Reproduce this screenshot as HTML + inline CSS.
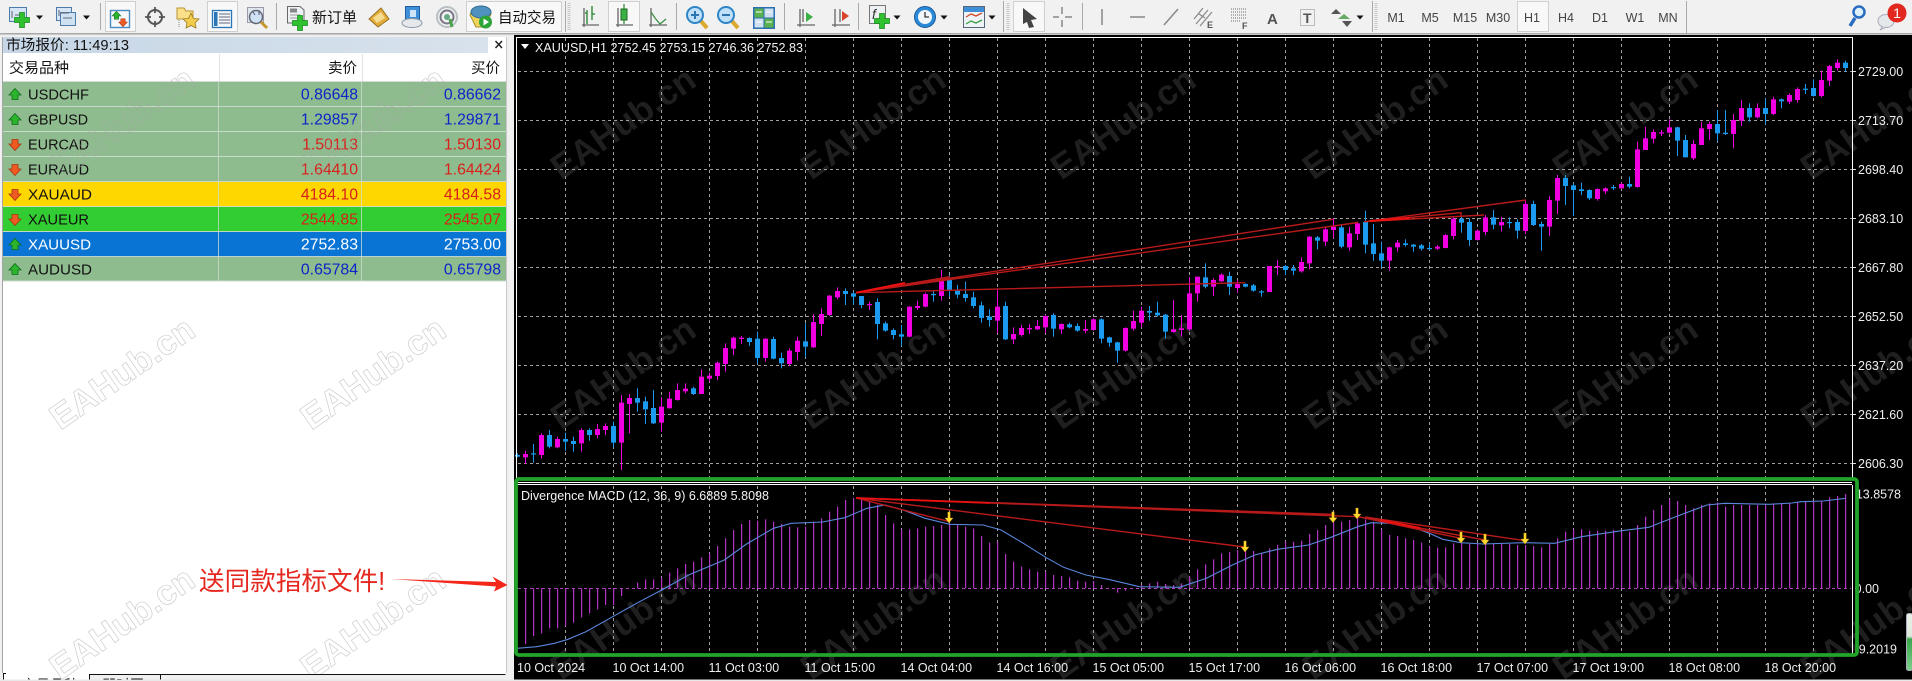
<!DOCTYPE html>
<html lang="zh"><head><meta charset="utf-8"><title>MT4</title>
<style>
html,body{margin:0;padding:0;background:#f0f0f0;width:1912px;height:681px;overflow:hidden}
svg{display:block;font-family:"Liberation Sans","Noto Sans CJK SC",sans-serif}
.ax{font-size:12.5px;fill:#eee}
.tf{font-size:12.5px;fill:#444;text-anchor:middle}
.s{font-size:15px;fill:#111}
.p{font-size:15.8px;text-anchor:end}
.wm{font-size:35px;font-weight:bold;text-anchor:middle}
</style></head><body>
<svg xmlns="http://www.w3.org/2000/svg" width="1912" height="681" viewBox="0 0 1912 681">
<defs>
<clipPath id="cp"><rect x="0" y="36" width="506" height="645"/></clipPath>
<clipPath id="cc"><rect x="514" y="36" width="1398" height="644"/></clipPath>
<linearGradient id="tb" x1="0" x2="1"><stop offset="0" stop-color="#c6d6e6"/><stop offset="1" stop-color="#d8e2ec"/></linearGradient>
<linearGradient id="gg" x1="0" y1="0" x2="0" y2="1"><stop offset="0" stop-color="#e8f0e8"/><stop offset=".4" stop-color="#dfe8df"/><stop offset=".45" stop-color="#3aa84c"/><stop offset="1" stop-color="#7ccf8c"/></linearGradient>
<g id="dd"><polygon points="-3.5,15.5 3.5,15.5 0,19.5" fill="#111"/></g>
<g id="up"><polygon points="0,-6.5 6,0 3,0 3,4.5 -3,4.5 -3,0 -6,0" fill="#2cb52c" stroke="#0d6d1a" stroke-width=".8"/></g>
<g id="dn"><polygon points="0,6.5 6,0 3,0 3,-4.5 -3,-4.5 -3,0 -6,0" fill="#ee5a22" stroke="#a83410" stroke-width=".8"/></g>
<g id="plus"><path d="M-2.5,-7.5h5v5h5v5h-5v5h-5v-5h-5v-5h5z" fill="#30c030" stroke="#138a1b" stroke-width=".7"/></g>
</defs>

<!-- toolbar -->
<rect x="0" y="0" width="1912" height="33" fill="#f1f1f1"/>
<rect x="0" y="33" width="1912" height="1.5" fill="#a8a8a8"/>
<rect x="0" y="34.5" width="1912" height="2" fill="#ececec"/>
<g stroke="#aaa" stroke-width="1">
<path d="M100.5,3V30M276.5,3V30M565.5,1V32M676.5,3V30M784.5,3V30M858.5,3V30M1003.5,1V32M1082.5,3V30M1372.5,1V32M1686.5,1V33"/>
</g>
<g fill="none" stroke="#c6c6c6" stroke-dasharray="1 1" stroke-width="3"><path d="M569,3V31M1008,3V31M1376,3V31"/></g>
<g fill="#f8f8f8" stroke="#cfcfcf"><rect x="105.5" y="1.5" width="30" height="30"/><rect x="207.5" y="1.5" width="30" height="30"/><rect x="466.5" y="1.5" width="95" height="30"/><rect x="608.5" y="1.5" width="31" height="30"/><rect x="1013.5" y="1.5" width="31" height="30"/><rect x="1517.5" y="1.5" width="31" height="30"/></g>

<!-- new chart -->
<g transform="translate(18,15)"><rect x="-8.5" y="-7.5" width="17" height="14" fill="#d6e6f5" stroke="#4d7cab"/><path d="M-6,-4V3M-3,0H4" stroke="#667" fill="none"/><use href="#plus" x="4" y="5"/></g>
<use href="#dd" x="39.5" y="0"/>
<g transform="translate(66,16)"><rect x="-9.5" y="-8.5" width="15" height="13" fill="#d6e6f5" stroke="#4d7cab"/><rect x="-5.5" y="-3.5" width="15" height="13" fill="#cfe2f3" stroke="#4d7cab"/><path d="M-7,-6V0M-6,-3H3M-3,2H6" stroke="#667" fill="none"/></g>
<use href="#dd" x="86.5" y="0"/>
<!-- market watch -->
<g transform="translate(120,19)"><rect x="-9.5" y="-8.5" width="19" height="17" fill="#f6f9fc" stroke="#4b8bc1" stroke-width="1.4"/><g transform="translate(-3.5,-3) scale(.72)"><use href="#up"/></g><g transform="translate(3,3) scale(.72)"><use href="#dn"/></g></g>
<!-- navigator -->
<g transform="translate(155,17)" fill="none" stroke="#555" stroke-width="2"><circle r="7"/><path d="M0,-10V-4M0,4V10M-10,0H-4M4,0H10" stroke-width="1.8"/></g>
<!-- folder star -->
<g transform="translate(188,17)"><path d="M-11,-9H-4L-2,-6H5V2H-11Z" fill="#fbe08a" stroke="#b89430"/><path d="M-9,3v7" stroke="#888" stroke-dasharray="1 1"/><polygon points="3,-4 5.5,1.5 11,2 7,6 8,11 3,8.5 -2,11 -1,6 -5,2 .5,1.5" fill="#f3cc4e" stroke="#9a7a1e" stroke-width=".8"/></g>
<!-- terminal -->
<g transform="translate(222,19)"><rect x="-9.5" y="-8.5" width="19" height="17" fill="#f4f8fc" stroke="#2a75b5" stroke-width="1.3"/><rect x="-8" y="-7" width="3.5" height="14" fill="#2a75b5"/><path d="M-3,-5H8M-3,-2H8M-3,1H8M-3,4H8" stroke="#667"/></g>
<!-- tester -->
<g transform="translate(257,16)"><rect x="-9.5" y="-8.5" width="16" height="15" fill="#e0e6ee" stroke="#99a"/><circle cx="-1" cy="1" r="6.5" fill="#cfe2f3" stroke="#667" stroke-width="1.5"/><path d="M4,6L10,12" stroke="#c4962c" stroke-width="3"/><path d="M-4,-4l2,3M2,-6v5" stroke="#557"/></g>
<!-- new order -->
<g transform="translate(296,15)"><path d="M-8.5,-8.5H4L8,-5V8H-8.5Z" fill="#eef1f4" stroke="#666"/><rect x="-6" y="-6.5" width="7" height="4" fill="#888"/><path d="M-6,0H4M-6,3H1" stroke="#999"/><use href="#plus" x="4" y="8"/></g>
<text x="312" y="22.5" font-size="15" fill="#111" textLength="45" lengthAdjust="spacingAndGlyphs">新订单</text>
<!-- diamond -->
<g transform="translate(379,17)"><polygon points="-10,2 2,-9 10,2 -1,10" fill="#e2ad3c" stroke="#9a7220"/><polygon points="-6,1 2,-5 6,1 -2,6" fill="#f6dc92"/></g>
<!-- book cloud -->
<g transform="translate(413,16)"><rect x="-7.5" y="-9.5" width="14" height="14" fill="#3f8fd8" stroke="#1f5f9f"/><rect x="-3" y="-6" width="6" height="7" fill="#cfe6fa"/><ellipse cx="-1" cy="7" rx="10" ry="4.5" fill="#e6e8ec" stroke="#89a"/></g>
<!-- radio -->
<g transform="translate(447,17)" fill="none"><circle r="10" stroke="#b8c0c4" stroke-width="2"/><circle r="6.5" stroke="#778" stroke-width="2"/><circle r="3" fill="#6a8"/><path d="M3,2L5,10" stroke="#49a34f" stroke-width="3"/></g>
<!-- autotrade -->
<g transform="translate(481,17)"><path d="M-11,-2C-9,-12 7,-13 10,-3L4,10H-5Z" fill="#f1d55b" stroke="#a78f2c"/><ellipse cx="0" cy="-5" rx="10" ry="6" fill="#4f92bf" stroke="#2d6a90"/><circle cx="4.5" cy="5" r="6.5" fill="#2ca438"/><polygon points="2.5,1.5 8,5 2.5,8.5" fill="#fff"/></g>
<text x="498" y="22.5" font-size="15" fill="#111" textLength="58" lengthAdjust="spacingAndGlyphs">自动交易</text>
<!-- bars/candle/line -->
<g fill="none" stroke="#666" stroke-width="1.3">
<path d="M582,25H599M584,27V8"/><path d="M587,10V24M592,6V20M587,13h-2M592,14h3" stroke="#3b8f44" stroke-width="1.5"/>
<path d="M616,25H633M618,27V8"/><path d="M624,4V24" stroke="#3b8f44"/>
<path d="M649,25H667M651,27V8"/><path d="M651,12L655,18L660,24L666,19" stroke="#3b8f44"/>
</g>
<rect x="621" y="9" width="6" height="11" fill="#3bb044" stroke="#1d6a25"/>
<!-- zoom -->
<g transform="translate(695,15)"><path d="M5,5L12,13" stroke="#dca92f" stroke-width="4"/><circle r="8" fill="#bfe0f8" stroke="#2e86c8" stroke-width="2"/><path d="M-4,0H4M0,-4V4" stroke="#2e74b0" stroke-width="2"/></g>
<g transform="translate(726,15)"><path d="M5,5L12,13" stroke="#dca92f" stroke-width="4"/><circle r="8" fill="#bfe0f8" stroke="#2e86c8" stroke-width="2"/><path d="M-4,0H4" stroke="#2e74b0" stroke-width="2"/></g>
<g transform="translate(753,7)"><rect width="22" height="22" fill="#2a6fb0"/><rect x="1.5" y="1.5" width="9" height="9" fill="#5ab04c"/><rect x="11.5" y="1.5" width="9" height="9" fill="#cfe0f0"/><rect x="1.5" y="11.5" width="9" height="9" fill="#cfe0f0"/><rect x="11.5" y="11.5" width="9" height="9" fill="#5ab04c"/><path d="M3,5h6M13,5h6M3,15h6M13,15h6" stroke="#fff"/></g>
<g fill="none" stroke="#666" stroke-width="1.3"><path d="M797,25H815M800,27V9M803,9V22"/><path d="M832,25H850M835,27V9M840,9V22"/></g>
<polygon points="806,12 813,17 806,22" fill="#3bb044"/><polygon points="851,17 844,12 844,22" fill="#d8442a" transform="translate(-2,-1)"/>
<!-- indicators -->
<g transform="translate(878,15)"><rect x="-8.5" y="-9.5" width="16" height="18" fill="#eef1f4" stroke="#777"/><text x="-6" y="4" font-size="14" font-style="italic" fill="#333">f</text><use href="#plus" x="4" y="6"/></g>
<use href="#dd" x="897" y="0"/>
<g transform="translate(925,17)"><circle r="10.5" fill="#2a8ad8" stroke="#1a5a9a"/><circle r="7" fill="#f2f6fa"/><path d="M0,-5V0H4" stroke="#333" stroke-width="1.3" fill="none"/></g>
<use href="#dd" x="944" y="0"/>
<g transform="translate(974,17)"><rect x="-10.5" y="-10.5" width="21" height="21" fill="#eef3f8" stroke="#567"/><rect x="-10" y="-10" width="20" height="5" fill="#3f8fd8"/><path d="M-8,0L-3,-3L2,-1L8,-4" stroke="#d04a2a" fill="none" stroke-width="1.3"/><path d="M-8,7L-3,4L2,6L8,3" stroke="#3ba044" fill="none" stroke-width="1.3"/></g>
<use href="#dd" x="992" y="0"/>
<!-- draw tools -->
<polygon points="1023,8 1037,19 1031,20 1034,27 1029,28 1027,22 1023,24" fill="#444"/>
<g fill="none" stroke="#888" stroke-width="1.5">
<path d="M1062,7V14M1062,20V27M1053,17H1059M1065,17H1072"/>
<path d="M1102,9V25"/><path d="M1130,17H1145"/><path d="M1164,25L1178,9"/>
<path d="M1196,24L1208,10M1200,26L1212,12M1194,19L1203,8M1199,14L1205,18" stroke-width="1.2"/>
<path d="M1231,9H1247M1231,12H1247M1231,15H1247M1231,18H1247M1231,21H1240" stroke-dasharray="1 1" stroke-width="1.2"/>
</g>
<text x="1207" y="28" font-size="9" font-weight="bold" fill="#555">E</text>
<text x="1242" y="29" font-size="9" font-weight="bold" fill="#555">F</text>
<text x="1267" y="24" font-size="15" fill="#555" font-weight="bold">A</text>
<rect x="1300.5" y="9.5" width="14" height="16" fill="none" stroke="#888" stroke-dasharray="1 1"/><text x="1303" y="23" font-size="14" fill="#555" font-weight="bold">T</text>
<polygon points="1336,9 1341,14 1331,14" fill="#555"/><polygon points="1344,14 1350,19 1338,19" fill="#6a6"/><polygon points="1344,27 1339,21 1349,21" fill="#555" transform="translate(3,0)"/>
<use href="#dd" x="1360" y="0"/>
<text class="tf" x="1396" y="22">M1</text><text class="tf" x="1430" y="22">M5</text><text class="tf" x="1465" y="22">M15</text><text class="tf" x="1498" y="22">M30</text><text class="tf" x="1532" y="22">H1</text><text class="tf" x="1566" y="22">H4</text><text class="tf" x="1600" y="22">D1</text><text class="tf" x="1635" y="22">W1</text><text class="tf" x="1668" y="22">MN</text>
<g transform="translate(1857,15)"><path d="M-2,3L-7,11" stroke="#2a6cc0" stroke-width="3.5"/><circle cx="2" cy="-3" r="5.5" fill="#dff0ff" stroke="#2a6cc0" stroke-width="2.5"/></g>
<ellipse cx="1886" cy="21" rx="8" ry="6.5" fill="#e4e8ea" stroke="#aab"/><path d="M1883,26l-3,4l6,-3" fill="#e4e8ea" stroke="#aab"/>
<circle cx="1897" cy="13" r="9.5" fill="#e2281e"/><text x="1897" y="18" font-size="14" fill="#fff" text-anchor="middle">1</text>

<!-- left panel -->
<rect x="0" y="36" width="514" height="645" fill="#f0f0f0"/>
<rect x="3" y="37" width="503" height="644" fill="#fff"/>
<rect x="2" y="37" width="1" height="636" fill="#a4a4a4"/>
<rect x="506" y="37" width="1" height="636" fill="#c8c8c8"/>
<rect x="3" y="37" width="485" height="16" fill="url(#tb)"/>
<text x="6" y="50" font-size="14.5" fill="#111" textLength="123" lengthAdjust="spacingAndGlyphs">市场报价: 11:49:13</text>
<path d="M495.5,41L502,48M502,41L495.5,48" stroke="#222" stroke-width="1.5"/>
<path d="M219.5,54V81M362.5,54V81" stroke="#e2e2e2"/>
<path d="M3,81.5H506" stroke="#d8d8d8"/>
<text x="9" y="73" font-size="14.5" fill="#111" textLength="60" lengthAdjust="spacingAndGlyphs">交易品种</text>
<text x="357" y="73" font-size="14.5" fill="#111" text-anchor="end">卖价</text>
<text x="500" y="73" font-size="14.5" fill="#111" text-anchor="end">买价</text>

<rect x="3" y="82" width="503" height="100" fill="#8fbc8f"/>
<rect x="3" y="182" width="503" height="25" fill="#ffd700"/>
<rect x="3" y="207" width="503" height="25" fill="#32cd32"/>
<rect x="3" y="232" width="503" height="25" fill="#0a74d4"/>
<rect x="3" y="257" width="503" height="24" fill="#8fbc8f"/>
<g stroke="#cfdccf" stroke-width="1" fill="none"><path d="M3,106.5H506M3,131.5H506M3,156.5H506M3,181.5H506M3,206.5H506M3,231.5H506M3,256.5H506M3,281H506" stroke-opacity=".9"/><path d="M218.5,82V281M361.5,82V281" stroke-opacity=".75"/></g>
<use href="#up" x="15" y="95"/><use href="#up" x="15" y="120"/><use href="#dn" x="15" y="144"/><use href="#dn" x="15" y="169"/><use href="#dn" x="15" y="194"/><use href="#dn" x="15" y="219"/><use href="#up" x="15" y="245"/><use href="#up" x="15" y="270"/>
<g class="s">
<text class="s" x="28" y="99.5" textLength="61" lengthAdjust="spacingAndGlyphs">USDCHF</text>
<text class="s" x="28" y="124.5" textLength="60" lengthAdjust="spacingAndGlyphs">GBPUSD</text>
<text class="s" x="28" y="149.5" textLength="61" lengthAdjust="spacingAndGlyphs">EURCAD</text>
<text class="s" x="28" y="174.5" textLength="61" lengthAdjust="spacingAndGlyphs">EURAUD</text>
<text class="s" x="28" y="199.5" textLength="64" lengthAdjust="spacingAndGlyphs">XAUAUD</text>
<text class="s" x="28" y="224.5" textLength="61" lengthAdjust="spacingAndGlyphs">XAUEUR</text>
<text class="s" x="28" y="249.5" textLength="63" lengthAdjust="spacingAndGlyphs" style="fill:#fff">XAUUSD</text>
<text class="s" x="28" y="274.5" textLength="64" lengthAdjust="spacingAndGlyphs">AUDUSD</text>
</g>
<g class="p" fill="#0c24c8">
<text class="p" x="358" y="99.5">0.86648</text><text class="p" x="501" y="99.5">0.86662</text>
<text class="p" x="358" y="124.5">1.29857</text><text class="p" x="501" y="124.5">1.29871</text>
<text class="p" x="358" y="274.5">0.65784</text><text class="p" x="501" y="274.5">0.65798</text>
</g>
<g class="p" fill="#d8201c">
<text class="p" x="358" y="149.5">1.50113</text><text class="p" x="501" y="149.5">1.50130</text>
<text class="p" x="358" y="174.5">1.64410</text><text class="p" x="501" y="174.5">1.64424</text>
<text class="p" x="358" y="199.5">4184.10</text><text class="p" x="501" y="199.5">4184.58</text>
<text class="p" x="358" y="224.5">2544.85</text><text class="p" x="501" y="224.5">2545.07</text>
</g>
<g class="p" fill="#fff"><text class="p" x="358" y="249.5">2752.83</text><text class="p" x="501" y="249.5">2753.00</text></g>

<!-- panel watermarks -->
<g clip-path="url(#cp)" fill="none" stroke="#a4a4a4" stroke-width=".7" stroke-opacity=".55">
<text class="wm" transform="translate(122,123) rotate(-35)" dy="12">EAHub.cn</text>
<text class="wm" transform="translate(373,123) rotate(-35)" dy="12">EAHub.cn</text>
<text class="wm" transform="translate(122,373) rotate(-35)" dy="12">EAHub.cn</text>
<text class="wm" transform="translate(373,373) rotate(-35)" dy="12">EAHub.cn</text>
<text class="wm" transform="translate(122,623) rotate(-35)" dy="12">EAHub.cn</text>
<text class="wm" transform="translate(373,623) rotate(-35)" dy="12">EAHub.cn</text>
</g>

<!-- tabs -->
<rect x="89" y="674" width="417" height="7" fill="#f0f0f0"/>
<path d="M89.5,681V674.5H505.5M160.5,675V681M3.5,673V681M3,673.5H6" stroke="#111" fill="none"/>
<text x="22" y="690" font-size="14" fill="#111">交易品种</text>
<text x="102" y="690" font-size="14" fill="#111">即时图</text>

<!-- chart -->
<rect x="514" y="35" width="1398" height="644.5" fill="#000"/>
<rect x="0" y="679.5" width="1912" height="1.5" fill="#e8e8e8"/>
<g clip-path="url(#cc)" fill="#1f1f1f">
<text class="wm" transform="translate(623,123) rotate(-35)" dy="12">EAHub.cn</text>
<text class="wm" transform="translate(873,123) rotate(-35)" dy="12">EAHub.cn</text>
<text class="wm" transform="translate(1123,123) rotate(-35)" dy="12">EAHub.cn</text>
<text class="wm" transform="translate(1375,123) rotate(-35)" dy="12">EAHub.cn</text>
<text class="wm" transform="translate(1625,123) rotate(-35)" dy="12">EAHub.cn</text>
<text class="wm" transform="translate(1873,123) rotate(-35)" dy="12">EAHub.cn</text>
<text class="wm" transform="translate(623,373) rotate(-35)" dy="12">EAHub.cn</text>
<text class="wm" transform="translate(873,373) rotate(-35)" dy="12">EAHub.cn</text>
<text class="wm" transform="translate(1123,373) rotate(-35)" dy="12">EAHub.cn</text>
<text class="wm" transform="translate(1375,373) rotate(-35)" dy="12">EAHub.cn</text>
<text class="wm" transform="translate(1625,373) rotate(-35)" dy="12">EAHub.cn</text>
<text class="wm" transform="translate(1873,373) rotate(-35)" dy="12">EAHub.cn</text>
<text class="wm" transform="translate(623,623) rotate(-35)" dy="12">EAHub.cn</text>
<text class="wm" transform="translate(873,623) rotate(-35)" dy="12">EAHub.cn</text>
<text class="wm" transform="translate(1123,623) rotate(-35)" dy="12">EAHub.cn</text>
<text class="wm" transform="translate(1375,623) rotate(-35)" dy="12">EAHub.cn</text>
<text class="wm" transform="translate(1625,623) rotate(-35)" dy="12">EAHub.cn</text>
<text class="wm" transform="translate(1873,623) rotate(-35)" dy="12">EAHub.cn</text>
</g>
<g id="grid" fill="none" stroke="#a0a0a0" stroke-width="1" stroke-dasharray="3 3"></g>
<g id="hist"></g>
<path d="M518,588.5H1851" stroke="#b040c0" stroke-dasharray="3 3" fill="none"/>
<g id="candles"></g>

<!-- main divergence lines -->
<g fill="none" stroke="#b81a1a" stroke-width="1.4">
<path d="M856,292.7L1333,219.3M856,292.7L1358,222.5M856,292.7L949.7,276.7M856,292.7L1245,282.7"/>
<path d="M1364,221.7L1526,200M1364,221.7L1461,212.7L1461,216M1364,221.7L1484,215"/>
<path d="M856,292.7L905,283" stroke="#f01010" stroke-width="2"/>
<path d="M1370,221L1410,218" stroke="#f01010" stroke-width="2"/>
</g>

<!-- signal line -->
<path id="sig" fill="none" stroke="#5a86dc" stroke-width="1.1"/>
<!-- macd divergence lines -->
<g fill="none" stroke="#b81a1a" stroke-width="1.4">
<path d="M856,498L1245,547M856,498L949.7,521.7M856,498L1333,514.3M856,498L1358,516.7"/>
<path d="M1358,516.7L1461,538.3M1358,516.7L1485,540M1365,517L1525,540.7"/>
<path d="M856,498L990,503" stroke="#e81010" stroke-width="1.8"/>
<path d="M1380,520L1420,528" stroke="#ee1010" stroke-width="2"/>
</g>
<g id="arr" fill="#ffd92e" stroke="#c09010" stroke-width=".4"></g>

<!-- borders -->
<g stroke="#fff" stroke-width="1" fill="none"><path d="M517,37.5H1852M516.5,37V478M1852.5,37V478M516,482.5H1852M516,484.5H1852M516.5,485V655M1852.5,485V655"/></g>
<!-- price axis -->
<g class="ax">
<text class="ax" x="1858" y="76">2729.00</text><text class="ax" x="1858" y="125">2713.70</text><text class="ax" x="1858" y="174">2698.40</text><text class="ax" x="1858" y="223">2683.10</text><text class="ax" x="1858" y="272">2667.80</text><text class="ax" x="1858" y="321">2652.50</text><text class="ax" x="1858" y="370">2637.20</text><text class="ax" x="1858" y="419">2621.60</text><text class="ax" x="1858" y="468">2606.30</text>
<text class="ax" x="1901" y="498.5" style="text-anchor:end">13.8578</text>
<text class="ax" x="1879" y="593" style="text-anchor:end">0.00</text>
<text class="ax" x="1897" y="653.5" style="text-anchor:end">-9.2019</text>
</g>
<path d="M1853,71.5h3M1853,120.5h3M1853,169.5h3M1853,218.5h3M1853,267.5h3M1853,316.5h3M1853,365.5h3M1853,414.5h3M1853,463.5h3" stroke="#ddd"/>
<!-- time axis -->
<g class="ax">
<text class="ax" x="517" y="672">10 Oct 2024</text><text class="ax" x="612.5" y="672">10 Oct 14:00</text><text class="ax" x="708.5" y="672">11 Oct 03:00</text><text class="ax" x="804.5" y="672">11 Oct 15:00</text><text class="ax" x="900.5" y="672">14 Oct 04:00</text><text class="ax" x="996.5" y="672">14 Oct 16:00</text><text class="ax" x="1092.5" y="672">15 Oct 05:00</text><text class="ax" x="1188.5" y="672">15 Oct 17:00</text><text class="ax" x="1284.5" y="672">16 Oct 06:00</text><text class="ax" x="1380.5" y="672">16 Oct 18:00</text><text class="ax" x="1476.5" y="672">17 Oct 07:00</text><text class="ax" x="1572.5" y="672">17 Oct 19:00</text><text class="ax" x="1668.5" y="672">18 Oct 08:00</text><text class="ax" x="1764.5" y="672">18 Oct 20:00</text>
</g>
<!-- chart title -->
<polygon points="521,44 529,44 525,49" fill="#fff"/>
<text x="535" y="52" font-size="12.5" fill="#f2f2f2" textLength="268" lengthAdjust="spacingAndGlyphs">XAUUSD,H1  2752.45 2753.15 2746.36 2752.83</text>
<text x="521" y="500" font-size="12.5" fill="#f2f2f2" textLength="248" lengthAdjust="spacingAndGlyphs">Divergence MACD (12, 36, 9) 6.6889 5.8098</text>

<!-- green highlight -->
<rect x="516" y="479" width="1341" height="176" rx="3" fill="none" stroke="#22a32a" stroke-width="3.8"/>
<rect x="1906.5" y="613.5" width="6" height="57" rx="2" fill="url(#gg)" stroke="#aab"/>

<!-- annotation -->
<text x="199" y="590" font-size="25.6" fill="#e5281f">送同款指标文件!</text>
<polygon points="391,579 496,582 492.5,576.5 507.5,585 494,591.5 496,586.5" fill="#f4261a"/>

<script>
(function(){
var NS='http://www.w3.org/2000/svg';
function el(p,n,a){var e=document.createElementNS(NS,n);for(var k in a)e.setAttribute(k,a[k]);p.appendChild(e);return e;}
var g=document.getElementById('grid'),i,d='';
[71.5,120.5,169.5,218.5,267.5,316.5,365.5,414.5,463.5].forEach(function(y){d+='M518,'+y+'H1852';});
for(i=0;i<28;i++){var x=517.5+48*i;if(x>520)d+='M'+x+',38V478M'+x+',486V655';}
el(g,'path',{d:d});

var MAG='#f000e0',BLU='#1a9bf0',c=document.getElementById('candles');
function put(s,start,base){s.split(';').forEach(function(r,n){
 var col=r[0]=='m'?MAG:BLU,v=r.slice(1).split(',').map(Number),x=517+8*(start+n);
 el(c,'rect',{x:x,y:base+v[0]/3,width:1,height:(v[3]-v[0])/3,fill:col});
 el(c,'rect',{x:x-2,y:base+v[1]/3,width:5,height:Math.max(1.2,(v[2]-v[1])/3),fill:col});
});}
put('b640,645,650,652;m632,642,652,672;b612,640,643,668;m580,585,645,655;b570,585,620,625;m590,597,622,625;b578,597,605,632;b590,603,612,635;m565,570,610,635;b565,570,585,602;m552,567,585,595;m550,558,570,585;b545,558,608,622;m465,488,608,690;m462,474,492,580;b445,474,488,515;b470,484,508,552;b450,504,550,552;m472,500,548,575;m455,476,505,505;m430,450,480,482;m430,446,454,460;b440,445,462,465;m388,410,462,462;m398,407,416,425;m365,368,408,420;m310,324,372,395;m290,293,326,345;m288,293,297,312;b292,294,306,318;b275,296,354,370;m295,296,354,365;b290,297,356,358;b338,354,370,385;m325,332,372,378;m290,302,336,362;b250,304,320,352;m222,246,322,324;m205,222,252,288;m165,167,225,228;m142,153,172,178;b145,153,162,195;b155,160,170,195;b168,168,195,205;m185,192,195,210;b175,186,252,298;b245,250,272,275;b265,270,285,298;b255,283,290,318;m198,200,290,292;m182,198,204,210;m158,162,200,202;b150,162,165,185;m90,118,168,182;b105,120,152,170;b135,152,164,175;b125,162,174,185;b155,172,198,205;b185,196,234,248;b208,230,240,260;m145,200,242,280;b185,198,298,300;m262,282,298,312;m255,264,285,290;m252,264,268,282;m240,258,268,270;m225,228,262,280;b220,225,266,290;m250,252,268,282;b248,253,262,265;b250,258,272,275;m240,267,272,280;m235,238,270,272;b235,238,296,310;b290,292,308,320;b305,307,332,368;m262,264,332,335;m212,243,266,272;m200,212,248,262;b198,213,218,242;b185,218,226,230;b222,224,275,296;m180,268,276,278;m225,265,270,290;m112,160,268,272;m110,110,160,185;b70,112,140,145',0,240);
put('m415,420,440,468;m400,404,424,425;b395,408,440,465;m420,432,444,458;b430,432,440,442;b432,436,452,455;b450,454,457,470;m378,378,456,456;m360,378,382,405;b375,378,390,405;b375,385,392,405;m352,366,394,398;m288,290,370,388;b288,292,302,328;m262,268,305,318;m235,260,270,295;b255,262,320,325;m260,280,322,332;m245,250,282,300;b212,246,314,340;b252,310,342,362;b305,340,362,382;m320,322,362,392;m300,308,322,335;b298,310,315,320;b312,314,320,335;b312,316,326,332;b310,324,326,330;m315,320,326,330;m282,285,324,325;m228,236,288,298;b228,236,248,278;b235,246,300,318;m268,272,300,302;m225,232,276,285;b210,232,254,268;m230,246,256,275;b232,246,249,265;b238,246,272,296;m180,192,273,282;b182,192,255,258;b245,252,260,332;m168,180,260,288;m105,114,182,222;b105,114,138,195;b130,136,150,228;b128,148,153,165;b148,150,175,180;m145,147,177,182;m142,145,154,162;b135,141,144,150;m128,132,145,147;b110,132,140,145;m5,28,141,143',87,140);
put('m380,415,450,450;m388,396,416,430;m390,397,399,408;m358,382,398,400;b380,382,422,468;b405,420,472,472;m420,432,475,480;m365,385,435,435;m365,372,387,420;b330,372,400,425;b330,398,402,405;m342,360,402,445;m300,324,362,378;b310,324,352,365;m310,324,352,355;b295,324,342,372;m290,298,342,345;b295,298,304,325;m280,285,305,312;m262,267,300,308;b252,266,268,282;b238,264,288,290;m212,240,288,292;m195,198,242,258;m178,188,204,212;b182,188,204,215',141,0);

var h=document.getElementById('hist');
function bars(a,start){a.forEach(function(v,n){var x=517+8*(start+n),y=470+v/3,z=588.3;
 el(h,'rect',{x:x,y:Math.min(y,z),width:1.2,height:Math.abs(z-y),fill:'#b432c4'});});}
bars([522,498,490,475,475,468,458,442,430,418,405,405,378,355,338,328,328,322,308,295,282,275,262,250,228,205,180,162,150,152,148,155,162,170,172,170,155,145,125,110,90,85,88,95,105,135,160,178,178,175,170,168,165,160,165,170,175,198,218,215,252,275,290,298,305,305,315,318,322,332,335,333,345,355,368,362,355,345,340,335,342,345,340,320,298,283],1);
bars([268,250,246,240,240,243,250,235,225,215,215,212,192,180,165,155,155,150,145,148,155,178,195,198,205,210,218,230,233,232,220,220,222,222,222,222,222,222,225,225,228,232,222,205,185,178,178,182,182,182,180,182,185,165,140,120,105,88,93,105,115,105,100,97,110,105,105,105,105,105,100,100,100,95,95,95,92,82,78,72],87);

var p4=[[16,535],[60,530],[100,520],[130,508],[170,485],[230,440],[290,395],[340,360],[400,315],[480,270],[530,222],[590,175],[630,160],[700,156],[750,143],[800,115],[840,105],[880,120],[930,145],[985,163],[1060,165],[1100,180],[1150,220],[1200,262],[1240,292],[1290,315],[1340,328],[1410,350],[1500,352],[1560,325]];
var p5=[[50,285],[100,255],[150,238],[220,225],[270,202],[330,170],[360,158],[400,160],[450,170],[490,190],[520,208],[560,218],[610,222],[700,218],[770,220],[830,200],[920,182],[980,172],[1040,140],[1110,105],[1150,100],[1250,103],[1300,99],[1320,95],[1370,93],[1420,85]];
var pts=p4.map(function(q){return [(510+q[0]/2.24).toFixed(1),(470+q[1]/3).toFixed(1)];}).concat(p5.map(function(q){return [(1210+q[0]/2.2336).toFixed(1),(470+q[1]/3).toFixed(1)];}));
document.getElementById('sig').setAttribute('d','M'+pts.map(function(q){return q.join(',');}).join('L'));

var ar=document.getElementById('arr');
[[949,518],[1245,547],[1333,517.7],[1357,514],[1461,538],[1485,540],[1525,539]].forEach(function(q){
 el(ar,'path',{d:'M-1.2,-6H1.2V0H4L0,5L-4,0H-1.2Z',transform:'translate('+q[0]+','+q[1]+')'});});
})();
</script>
</svg>
</body></html>
